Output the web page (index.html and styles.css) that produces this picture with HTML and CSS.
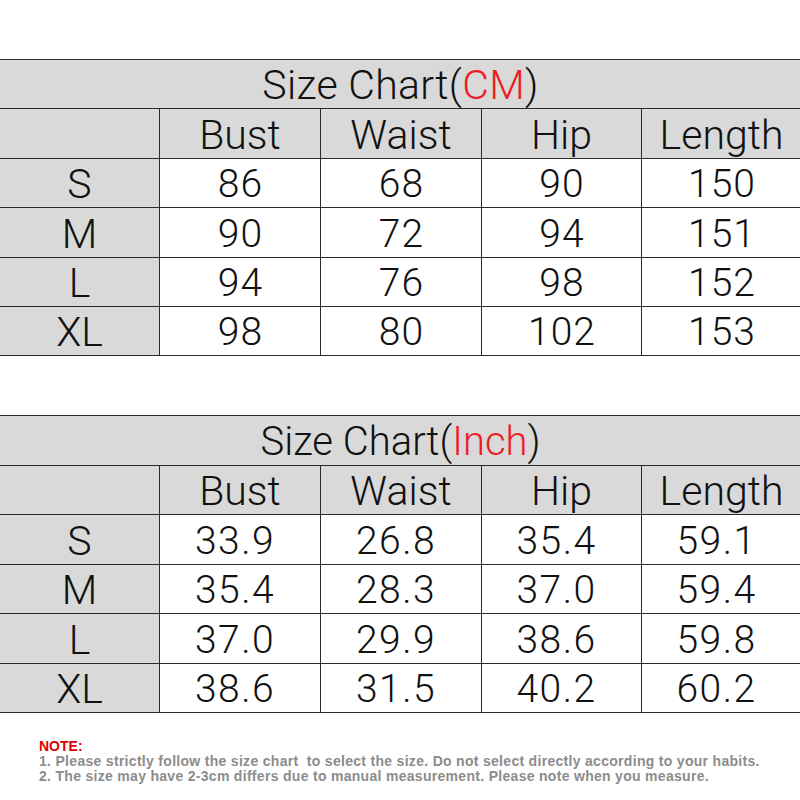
FILE: index.html
```html
<!DOCTYPE html>
<html>
<head>
<meta charset="utf-8">
<link rel="stylesheet" href="styles.css">
</head>
<body>
<div class="page">
  <div class="chart chart-cm">
    <div class="cell title">Size Chart(<span class="red">CM</span>)</div>
    <div class="cell head"></div>
    <div class="cell head">Bust</div>
    <div class="cell head">Waist</div>
    <div class="cell head">Hip</div>
    <div class="cell head">Length</div>

    <div class="cell size">S</div><div class="cell num">86</div><div class="cell num">68</div><div class="cell num">90</div><div class="cell num">150</div>
    <div class="cell size">M</div><div class="cell num">90</div><div class="cell num">72</div><div class="cell num">94</div><div class="cell num">151</div>
    <div class="cell size">L</div><div class="cell num">94</div><div class="cell num">76</div><div class="cell num">98</div><div class="cell num">152</div>
    <div class="cell size">XL</div><div class="cell num">98</div><div class="cell num">80</div><div class="cell num">102</div><div class="cell num">153</div>
  </div>

  <div class="chart chart-inch">
    <div class="cell title title-inch">Size Chart(<span class="red">Inch</span>)</div>
    <div class="cell head"></div>
    <div class="cell head">Bust</div>
    <div class="cell head">Waist</div>
    <div class="cell head">Hip</div>
    <div class="cell head">Length</div>

    <div class="cell size">S</div><div class="cell num dec">33.9</div><div class="cell num dec">26.8</div><div class="cell num dec">35.4</div><div class="cell num dec">59.1</div>
    <div class="cell size">M</div><div class="cell num dec">35.4</div><div class="cell num dec">28.3</div><div class="cell num dec">37.0</div><div class="cell num dec">59.4</div>
    <div class="cell size">L</div><div class="cell num dec">37.0</div><div class="cell num dec">29.9</div><div class="cell num dec">38.6</div><div class="cell num dec">59.8</div>
    <div class="cell size">XL</div><div class="cell num dec">38.6</div><div class="cell num dec">31.5</div><div class="cell num dec">40.2</div><div class="cell num dec">60.2</div>
  </div>

  <div class="note">
    <div class="note-title">NOTE:</div>
    <div class="note-line">1. Please strictly follow the size chart &nbsp;to select the size. Do not select directly according to your habits.</div>
    <div class="note-line">2. The size may have 2-3cm differs due to manual measurement. Please note when you measure.</div>
  </div>
</div>
</body>
</html>
```

FILE: styles.css
```css
html, body {
  margin: 0;
  padding: 0;
  background: #ffffff;
}

.page {
  width: 800px;
  height: 800px;
  padding-top: 59px;
  box-sizing: border-box;
}

.chart {
  display: grid;
  grid-template-columns: 159px 160px 160px 159px 159px;
  grid-template-rows: 48px 49px 48px 49px 48px 48px;
  gap: 1px;
  padding: 1px 0;
  background: #2a2a2a;
  font-family: Roboto, "Noto Sans", sans-serif;
  font-weight: 300;
  color: #111;
}

.chart-inch {
  margin-top: 59px;
  grid-template-rows: 49px 48px 49px 48px 49px 48px;
}

.cell {
  background: #ffffff;
  display: flex;
  align-items: center;
  justify-content: center;
  font-size: 41px;
  line-height: 1;
  padding-top: 3px;
  box-sizing: border-box;
}

.num {
  font-size: 39px;
  letter-spacing: 1px;
  padding-left: 1px;
}

.dec {
  letter-spacing: 1.5px;
  padding-left: 0;
  padding-right: 10px;
}

.title {
  grid-column: 1 / -1;
  background: #d9d9d9;
  letter-spacing: 0.3px;
}

.title-inch {
  font-size: 40px;
  letter-spacing: 0;
}

.head,
.size {
  background: #d9d9d9;
}

.red {
  color: #ee1c25;
}

.note {
  margin-top: 26px;
  padding-left: 39px;
  font-family: "Liberation Sans", Arial, sans-serif;
  font-weight: bold;
  font-size: 14px;
  line-height: 15px;
  letter-spacing: 0.3px;
  color: #8c8c8c;
}

.note-title {
  color: #e00000;
  font-size: 14px;
  letter-spacing: 0;
}
```
